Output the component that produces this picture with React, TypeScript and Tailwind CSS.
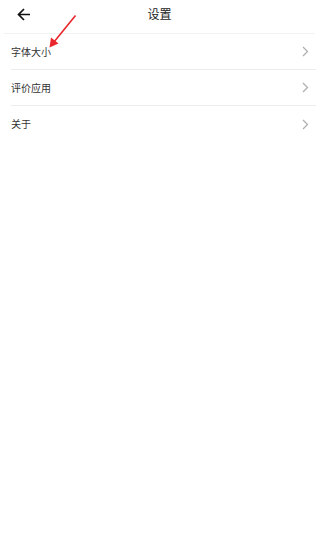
import React from 'react';

const items = ['字体大小', '评价应用', '关于'];

const Chevron = () => (
  <svg width="7" height="11" viewBox="0 0 7 11" fill="none">
    <path d="M1 1l4.5 4.5L1 10" stroke="#b0b0b0" strokeWidth="1.3" />
  </svg>
);

export default function App() {
  return (
    <div
      className="relative w-[319px] h-[556px] bg-white text-[#333]"
      style={{ fontFamily: '"Noto Sans CJK SC", "Noto Sans", sans-serif' }}
    >
      {/* Header */}
      <div className="relative h-[33px] flex items-center justify-center">
        <button className="absolute left-[16px] top-[6px] w-[16px] h-[16px] flex items-center justify-center">
          <svg width="14" height="13" viewBox="0 0 14 13" fill="none">
            <path d="M13 6.5H2M7 1L1.5 6.5 7 12" stroke="#111" strokeWidth="1.7" />
          </svg>
        </button>
        <h1 className="text-[12px] text-[#222] -mt-[5px]">设置</h1>
      </div>
      <div className="mx-[4px] h-px bg-[#f2f2f2]" />

      {/* List */}
      <div className="pl-[11px] pr-[3px]">
        {items.map((label) => (
          <div key={label} className="h-[36px] flex items-center justify-between border-b border-[#ececec] last:border-b-0">
            <span className="text-[10px] leading-none">{label}</span>
            <span className="mr-[7px]"><Chevron /></span>
          </div>
        ))}
      </div>

      {/* Annotation arrow */}
      <svg className="absolute left-0 top-0 pointer-events-none" width="319" height="60">
        <line x1="75.5" y1="15.5" x2="54" y2="42" stroke="#e8262b" strokeWidth="1.6" />
        <polygon points="49.5,47.5 51,37.5 58.5,43.5" fill="#e8262b" />
      </svg>
    </div>
  );
}
